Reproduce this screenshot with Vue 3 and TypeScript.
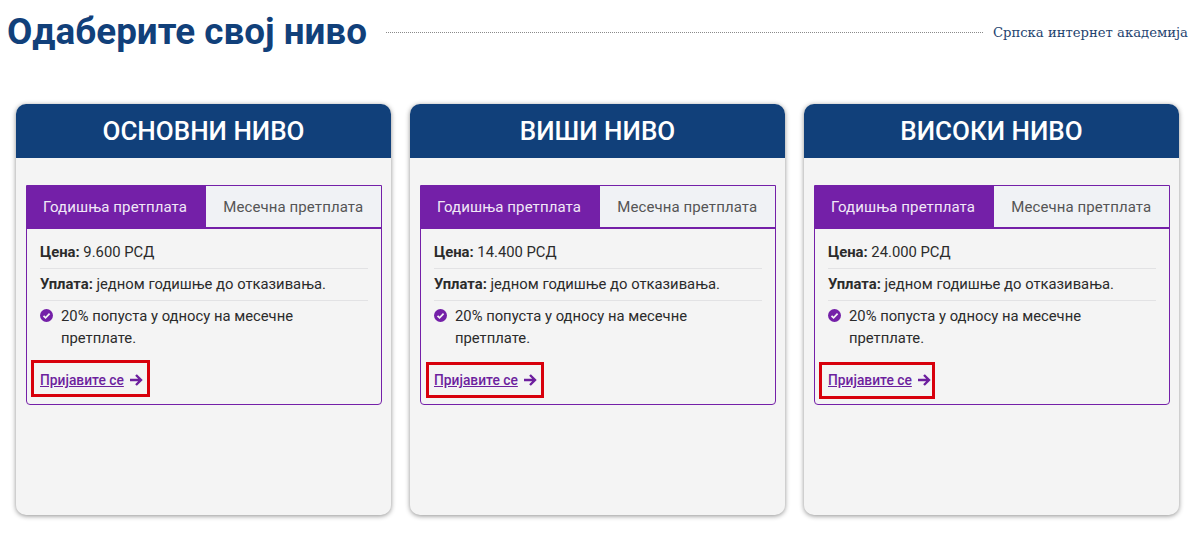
<script setup lang="ts">
interface Level {
  title: string;
  price: string;
  // the red marker is hand-drawn, a little different on each card
  mark: { left: number; top: number; width: number; height: number };
}

const levels: Level[] = [
  { title: 'ОСНОВНИ НИВО', price: '9.600 РСД', mark: { left: -9.5, top: -9, width: 119, height: 37 } },
  { title: 'ВИШИ НИВО', price: '14.400 РСД', mark: { left: -8.5, top: -7, width: 118, height: 36 } },
  { title: 'ВИСОКИ НИВО', price: '24.000 РСД', mark: { left: -9, top: -7, width: 116, height: 37 } },
];

const markStyle = (level: Level) => ({
  left: `${level.mark.left}px`,
  top: `${level.mark.top}px`,
  width: `${level.mark.width}px`,
  height: `${level.mark.height}px`,
});
</script>

<template>
  <div class="page">
    <header class="top">
      <h1 class="top-title">Одаберите свој ниво</h1>
      <div class="top-line"></div>
      <span class="top-brand">Српска интернет академија</span>
    </header>

    <main class="cards">
      <section v-for="level in levels" :key="level.title" class="card">
        <h2 class="card-head">{{ level.title }}</h2>
        <div class="plan">
          <div class="tabs">
            <button class="tab is-active" type="button">Годишња претплата</button>
            <button class="tab" type="button">Месечна претплата</button>
          </div>
          <div class="plan-body">
            <p class="row"><strong>Цена:</strong> {{ level.price }}</p>
            <p class="row"><strong>Уплата:</strong> једном годишње до отказивања.</p>
            <div class="perk">
              <svg class="perk-icon" viewBox="0 0 24 24" aria-hidden="true">
                <circle cx="12" cy="12" r="12" fill="#7420a8" />
                <path d="M6.5 12.5l3.8 3.8 7.4-7.6" fill="none" stroke="#f4f4f5" stroke-width="3.2" />
              </svg>
              <span>20% попуста у односу на месечне претплате.</span>
            </div>
            <div class="cta-wrap">
              <a class="cta" href="#">Пријавите се</a>
              <svg class="cta-arrow" viewBox="0 0 14 14" aria-hidden="true">
                <path d="M1 7h11M7 2l5 5-5 5" fill="none" stroke="#6d1f9e" stroke-width="2.4" />
              </svg>
              <span class="cta-mark" :style="markStyle(level)"></span>
            </div>
          </div>
        </div>
      </section>
    </main>
  </div>
</template>

<style scoped>
.page {
  width: 1200px;
  height: 535px;
  overflow: hidden;
  background: #fff;
  font-family: Roboto, "Liberation Sans", sans-serif;
  color: #2b2b2b;
}

.top {
  display: flex;
  align-items: center;
  height: 64px;
  padding: 0 12px 0 7px;
}

.top-title {
  margin: 0;
  font-size: 36.8px;
  font-weight: 700;
  line-height: 1;
  color: #11407a;
  white-space: nowrap;
}

.top-line {
  flex: 1;
  margin: 0 10px 0 19px;
  border-top: 1px dotted #8a8a8a;
}

.top-brand {
  font-family: "DejaVu Serif", serif;
  font-size: 13.2px;
  color: #1f4470;
  white-space: nowrap;
}

.cards {
  display: grid;
  grid-template-columns: repeat(3, 375px);
  column-gap: 19px;
  padding: 40px 0 0 16px;
}

.card {
  height: 411px;
  background: #f4f4f4;
  border-radius: 10px;
  box-shadow: 0 1px 5px rgba(0, 0, 0, 0.45);
}

.card-head {
  margin: 0;
  height: 54px;
  line-height: 54px;
  background: #11407a;
  border-radius: 10px 10px 0 0;
  color: #fff;
  text-align: center;
  font-size: 26px;
  font-weight: 500;
}

.plan {
  height: 220px;
  box-sizing: border-box;
  margin: 27px 9.5px 0 10px;
  border: 1px solid #7420a8;
  border-radius: 0 0 4px 4px;
}

.tabs {
  display: flex;
  height: 41px;
  border-bottom: 2px solid #7420a8;
}

.tab {
  width: 179px;
  padding: 0;
  border: 0;
  background: #f0f2f5;
  color: #555;
  font-family: inherit;
  font-size: 15px;
  letter-spacing: 0.1px;
}

.tab.is-active {
  padding-right: 3px;
  background: #7420a8;
  color: #f1e8f7;
}

.tab:last-child {
  flex: 1;
}

.plan-body {
  padding: 12px 13px 0;
  font-size: 14.8px;
}

.row {
  margin: 0 0 4px;
  padding-bottom: 5px;
  line-height: 22px;
  border-bottom: 1px solid #e2e2e4;
}

.row strong {
  font-weight: 700;
}

.perk {
  display: flex;
  align-items: flex-start;
  gap: 8px;
  line-height: 22px;
}

.perk-icon {
  flex: none;
  width: 13px;
  height: 13px;
  margin-top: 4px;
}

.cta-wrap {
  position: relative;
  display: flex;
  align-items: center;
  gap: 5px;
  height: 22px;
  margin-top: 20px;
}

.cta-mark {
  position: absolute;
  box-sizing: border-box;
  border: 3px solid #d8000c;
  pointer-events: none;
}

.cta {
  color: #6d1f9e;
  font-size: 13.8px;
  font-weight: 500;
  text-decoration: underline;
}

.cta-arrow {
  width: 14px;
  height: 14px;
}
</style>
